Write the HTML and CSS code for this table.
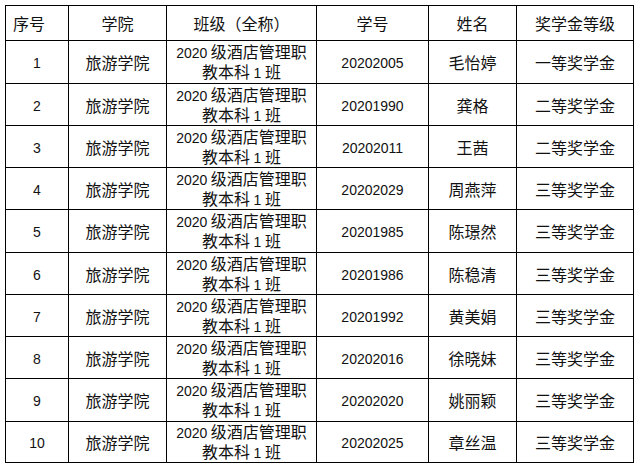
FILE: index.html
```html
<!DOCTYPE html>
<html lang="zh-CN">
<head>
<meta charset="utf-8">
<title>奖学金名单</title>
<link rel="stylesheet" href="styles.css">
</head>
<body>
<table class="list">
  <colgroup>
    <col class="c1"><col class="c2"><col class="c3"><col class="c4"><col class="c5"><col class="c6">
  </colgroup>
  <thead>
    <tr><th class="first">序号</th><th>学院</th><th>班级（全称）</th><th>学号</th><th>姓名</th><th>奖学金等级</th></tr>
  </thead>
  <tbody>
    <tr><td><span class="n">1</span></td><td>旅游学院</td><td class="cls"><span class="n">2020</span> 级酒店管理职<br>教本科 <span class="n">1</span> 班</td><td><span class="n">20202005</span></td><td>毛怡婷</td><td>一等奖学金</td></tr>
    <tr><td><span class="n">2</span></td><td>旅游学院</td><td class="cls"><span class="n">2020</span> 级酒店管理职<br>教本科 <span class="n">1</span> 班</td><td><span class="n">20201990</span></td><td>龚格</td><td>二等奖学金</td></tr>
    <tr><td><span class="n">3</span></td><td>旅游学院</td><td class="cls"><span class="n">2020</span> 级酒店管理职<br>教本科 <span class="n">1</span> 班</td><td><span class="n">20202011</span></td><td>王茜</td><td>二等奖学金</td></tr>
    <tr><td><span class="n">4</span></td><td>旅游学院</td><td class="cls"><span class="n">2020</span> 级酒店管理职<br>教本科 <span class="n">1</span> 班</td><td><span class="n">20202029</span></td><td>周燕萍</td><td>三等奖学金</td></tr>
    <tr><td><span class="n">5</span></td><td>旅游学院</td><td class="cls"><span class="n">2020</span> 级酒店管理职<br>教本科 <span class="n">1</span> 班</td><td><span class="n">20201985</span></td><td>陈璟然</td><td>三等奖学金</td></tr>
    <tr><td><span class="n">6</span></td><td>旅游学院</td><td class="cls"><span class="n">2020</span> 级酒店管理职<br>教本科 <span class="n">1</span> 班</td><td><span class="n">20201986</span></td><td>陈稳清</td><td>三等奖学金</td></tr>
    <tr><td><span class="n">7</span></td><td>旅游学院</td><td class="cls"><span class="n">2020</span> 级酒店管理职<br>教本科 <span class="n">1</span> 班</td><td><span class="n">20201992</span></td><td>黄美娟</td><td>三等奖学金</td></tr>
    <tr><td><span class="n">8</span></td><td>旅游学院</td><td class="cls"><span class="n">2020</span> 级酒店管理职<br>教本科 <span class="n">1</span> 班</td><td><span class="n">20202016</span></td><td>徐晓妹</td><td>三等奖学金</td></tr>
    <tr><td><span class="n">9</span></td><td>旅游学院</td><td class="cls"><span class="n">2020</span> 级酒店管理职<br>教本科 <span class="n">1</span> 班</td><td><span class="n">20202020</span></td><td>姚丽颖</td><td>三等奖学金</td></tr>
    <tr><td><span class="n">10</span></td><td>旅游学院</td><td class="cls"><span class="n">2020</span> 级酒店管理职<br>教本科 <span class="n">1</span> 班</td><td><span class="n">20202025</span></td><td>章丝温</td><td>三等奖学金</td></tr>
  </tbody>
</table>
</body>
</html>
```
FILE: styles.css
```css
html, body {
  margin: 0;
  padding: 0;
  background: #fff;
}
body {
  padding: 5px 0 0 5px;
  font-family: "Noto Sans CJK SC", "Liberation Sans", sans-serif;
  font-size: 16px;
  color: #111;
}
.list {
  border-collapse: collapse;
  table-layout: fixed;
  width: 628px;
}
.c1 { width: 63px; }
.c2 { width: 98px; }
.c3 { width: 150px; }
.c4 { width: 112px; }
.c5 { width: 88px; }
.c6 { width: 117px; }
.list th, .list td {
  border: 1px solid #000;
  padding: 0;
  text-align: center;
  vertical-align: middle;
  font-weight: normal;
  line-height: 18px;
  white-space: nowrap;
}
.list thead tr { height: 35px; }
.list tbody tr { height: 42px; }
.list tbody tr:nth-child(1),
.list tbody tr:nth-child(5),
.list tbody tr:nth-child(9) { height: 43px; }
.list tbody tr:nth-child(10) { height: 41px; }
.list th.first {
  text-align: left;
  padding-left: 7px;
}
.n {
  font-family: "Liberation Sans", sans-serif;
  font-size: 14px;
}
```
